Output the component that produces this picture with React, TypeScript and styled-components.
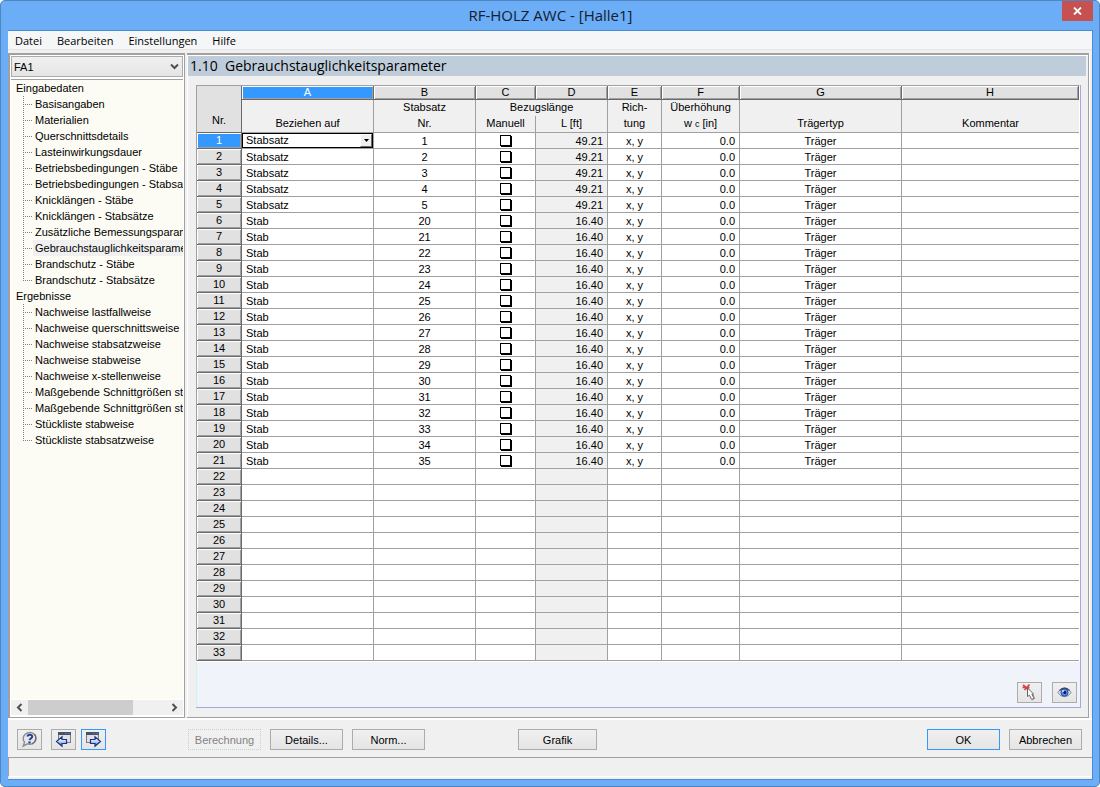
import React from "react";
import styled, { createGlobalStyle, css } from "styled-components";

const ui = '"Liberation Sans", Arial, sans-serif';
const caption = '"Open Sans", "Segoe UI", sans-serif';
const line = "#a0a0a0";

const GlobalStyle = createGlobalStyle`
  *, *::before, *::after { box-sizing: border-box; }
  body { margin: 0; background: #fff; color: #000; font: 11px/16px ${ui}; }
  button, select, input { font: inherit; color: inherit; margin: 0; padding: 0; border-radius: 0; }
`;

const Window = styled.div`
  display: flex;
  flex-direction: column;
  min-height: 100vh;
  padding: 0 6px 6px 7px;
  background: #6badf6;
  border: 1px solid #4f86c0;
  border-radius: 5px;
`;

const TitleBar = styled.header`
  display: grid;
  grid-template-columns: 1fr auto 1fr;
  height: 29px;
`;

const Title = styled.h1`
  grid-column: 2;
  margin: 0;
  color: #14202e;
  font: 400 15px/28px ${caption};
`;

const CloseButton = styled.button`
  display: grid;
  place-items: center;
  justify-self: end;
  width: 31px;
  height: 20px;
  border: 0;
  background: #c75050;
  color: #fff;
`;

const Client = styled.div`
  flex: 1;
  display: flex;
  flex-direction: column;
  background: #f0f0f0;
  border: 1px solid #4a8bd4;
  border-width: 1px 1px 1px 0;
`;

const MenuBar = styled.nav`
  display: flex;
  gap: 15px;
  height: 19px;
  padding-left: 7px;
  background: #f5f6f7;
  border-bottom: 1px solid #e5e5e5;
  font: 11px/20px ${caption};
`;

const MenuLink = styled.a`
  color: inherit;
  text-decoration: none;
`;

const Work = styled.div`
  flex: 1;
  display: flex;
  gap: 2px;
  margin-top: 3px;
  border-bottom: 2px solid #fff;
`;

const Sidebar = styled.aside`
  display: flex;
  flex-direction: column;
  width: 177px;
  padding: 1px 1px 2px;
  background: #fff;
  border: 1px solid ${line};
  border-width: 2px 1px 1px 2px;
`;

const CaseSelect = styled.div`
  display: flex;
  border-bottom: 1px solid ${line};
  padding-bottom: 2px;
`;

const stacked = css`
  appearance: none;
  grid-area: 1 / 1;
`;

const SelectBox = styled.div`
  flex: 1;
  display: grid;
  align-items: center;
  svg { grid-area: 1 / 1; justify-self: end; margin-right: 4px; pointer-events: none; }
`;

const Select = styled.select`
  ${stacked}
  width: 100%;
  height: 21px;
  padding-left: 2px;
  border: 1px solid #acacac;
  background: linear-gradient(#f0f0f0, #e5e5e5);
`;

const Tree = styled.ul`
  flex: 1;
  margin: 0;
  padding: 0 0 0 5px;
  overflow: hidden;
  list-style: none;
  white-space: nowrap;
  background: #fcfcf4;
`;

const Branch = styled.ul`
  margin: 0;
  padding: 0 0 0 7px;
  list-style: none;
`;

const Leaf = styled.li`
  padding-left: 10px;
  background-image:
    repeating-linear-gradient(90deg, #808080 0 1px, transparent 1px 2px),
    repeating-linear-gradient(#808080 0 1px, transparent 1px 2px);
  background-repeat: no-repeat;
  background-position: 0 8px, 0 0;
  background-size: 9px 1px, 1px 100%;
  &:last-child { background-size: 9px 1px, 1px 9px; }
`;

const TreeLink = styled.a<{ $current?: boolean }>`
  display: block;
  padding-left: 2px;
  overflow: hidden;
  color: inherit;
  text-decoration: none;
  background: ${(p) => (p.$current ? "#f0f0f0" : "transparent")};
`;

const ScrollBar = styled.div`
  display: grid;
  grid-template-columns: 17px 1fr 17px;
  height: 15px;
  margin-top: 1px;
  background: #f0f0f0;
`;

const ScrollButton = styled.button`
  display: grid;
  place-items: center;
  border: 0;
  background: transparent;
`;

const ScrollThumb = styled.div`
  width: 76%;
  background: #cdcdcd;
`;

const Main = styled.main`
  flex: 1;
  min-width: 0;
  display: flex;
  flex-direction: column;
  margin-right: 3px;
  padding: 1px 2px 9px 1px;
  border: 1px solid ${line};
  border-width: 2px 1px 1px 0;
  box-shadow: inset 1px 1px #fff, 1px 0 #fff;
`;

const PageTitle = styled.h2`
  margin: 0 0 9px;
  padding-left: 2px;
  background: #bfcddb;
  font: 400 14px/20px ${caption};
  white-space: pre;
`;

const GridPanel = styled.section`
  flex: 1;
  display: flex;
  flex-direction: column;
  margin: 0 5px 0 8px;
  background: #f0f4fa;
  border: 1px solid #a6a6e6;
  border-width: 0 1px 1px 0;
  box-shadow: inset 1px 0 #d2f2ee;
`;

const Grid = styled.table`
  width: 100%;
  table-layout: fixed;
  border-collapse: separate;
  border-spacing: 0;
  border: 1px solid ${line};
  border-width: 1px 0 0 1px;
  border-right: 1px solid #fff;
  box-shadow: 0 1px #fff;
`;

const bevel = css`
  background: #e1e1e1;
  border: 1px solid #696969;
  border-width: 0 1px 1px 0;
  box-shadow: inset 1px 1px #fff, inset -1px -1px ${line};
`;

const Corner = styled.th`
  padding: 21px 0 0;
  font-weight: 400;
  line-height: 14px;
  background: #e1e1e1;
  border-right: 1px solid #696969;
  border-bottom: 1px solid #696969;
`;

const Letter = styled.th<{ $active?: boolean }>`
  ${bevel}
  height: 14px;
  padding: 0;
  font-weight: 400;
  line-height: 13px;
  ${(p) => p.$active && css`background: #3399ff; color: #fff;`}
`;

const Head = styled.th<{ $upper?: boolean; $last?: boolean }>`
  height: ${(p) => (p.$upper ? 16 : 17)}px;
  padding: 0;
  font-weight: 400;
  line-height: 15px;
  vertical-align: top;
  background: #f0f0f0;
  border: 0 solid ${line};
  border-right-width: ${(p) => (p.$last ? 0 : 1)}px;
  border-bottom-width: ${(p) => (p.$upper ? 0 : 1)}px;
`;

const RowNumber = styled.th<{ $active?: boolean }>`
  ${bevel}
  height: 16px;
  padding: 0;
  font-weight: 400;
  line-height: 14px;
  vertical-align: top;
  ${(p) => p.$active && css`background: #3399ff; color: #fff;`}
`;

const Cell = styled.td<{ $align?: string; $locked?: boolean; $last?: boolean }>`
  height: 16px;
  padding: 1px 4px 0;
  line-height: 14px;
  text-align: ${(p) => p.$align || "left"};
  background: ${(p) => (p.$locked ? "#f0f0f0" : "#fff")};
  border: 0 solid ${line};
  border-width: 0 ${(p) => (p.$last ? 0 : 1)}px 1px 0;
`;

const EditCell = styled(Cell)`
  padding: 0;
`;

const CheckCell = styled(Cell)`
  padding: 0;
`;

const CellSelectBox = styled(SelectBox)`
  border: 1px solid #000;
  height: 15px;
`;

const CellSelect = styled.select`
  ${stacked}
  width: 100%;
  height: 13px;
  padding-left: 3px;
  border: 0;
  background: #fff;
  line-height: 13px;
`;

const DropMark = styled.span`
  grid-area: 1 / 1;
  justify-self: end;
  display: grid;
  place-items: center;
  width: 12px;
  height: 13px;
  background: #f0f0f0;
  border: 1px solid #fff;
  border-right-color: #696969;
  border-bottom-color: #696969;
  pointer-events: none;
  svg { margin: 0; grid-area: auto; justify-self: center; }
`;

const Check = styled.input`
  display: block;
  appearance: none;
  width: 11px;
  height: 11px;
  margin: 0 auto;
  border: 1px solid #000;
  background: #fff;
  box-shadow: 1px 1px #000;
`;

const Sub = styled.small`
  font-size: 9px;
  line-height: 1;
`;

const PanelTools = styled.div`
  display: flex;
  justify-content: flex-end;
  gap: 10px;
  margin-top: auto;
  padding: 0 3px 4px;
`;

const Button = styled.button<{ $default?: boolean; $wide?: boolean }>`
  display: grid;
  place-items: center;
  width: ${(p) => (p.$wide ? 79 : 73)}px;
  height: 21px;
  border: 1px solid ${(p) => (p.$default ? "#3399ff" : "#acacac")};
  background: linear-gradient(#f0f0f0, #e5e5e5);
  &:disabled {
    color: #838383;
    background: #f0f0f0;
    border: 1px dotted #bcd8cc;
  }
`;

const IconButton = styled(Button)`
  width: 25px;
`;

const Footer = styled.footer`
  display: flex;
  align-items: center;
  height: 38px;
  padding: 2px 10px 0 9px;
  border-bottom: 1px solid ${line};
`;

const ButtonGroup = styled.div<{ $gap: number; $width?: number; $end?: boolean }>`
  display: flex;
  gap: ${(p) => p.$gap}px;
  width: ${(p) => (p.$width ? p.$width + "px" : "auto")};
  margin-left: ${(p) => (p.$end ? "auto" : 0)};
`;

const StatusBar = styled.div`
  height: 19px;
  margin-bottom: 2px;
  border-left: 1px solid ${line};
  border-bottom: 1px solid #fff;
`;

const Chevron = ({ d }: { d: string }) => (
  <svg width="9" height="9" viewBox="0 0 9 9" fill="none" stroke="#505050" strokeWidth="2" aria-hidden="true">
    <path d={d} />
  </svg>
);

const HelpIcon = () => (
  <svg width="17" height="17" viewBox="0 0 17 17" aria-hidden="true">
    <path d="M9 1.500c3.500 0 6 2.600 6 5.800s-2.500 5.900-6 5.900c-.9 0-1.700-.1-2.400-.4L2.200 15l1.300-3.800C2.600 10.200 2.200 8.900 2.200 7.500c0-3.400 3-6 6.800-6z" fill="#e6e8f0" stroke="#8e8e8e" strokeWidth="1.400" />
    <path d="M13.600 3.200c2.300 3 1.500 7.700-2.700 9.600" fill="none" stroke="#666" strokeWidth="1.200" />
    <path d="M6.300 5.500C6.600 4 8 3.600 9.100 3.700c2.700.2 2.700 2.600.9 3.600-.9.500-1.300 1-1.400 1.900" fill="none" stroke="#24408e" strokeWidth="2" />
    <rect x="7.400" y="10.400" width="2.200" height="2" fill="#24408e" />
  </svg>
);

const PageIcon = ({ forward }: { forward?: boolean }) => {
  const fill = forward ? "arrow-forward" : "arrow-back";
  return (
    <svg width="17" height="17" viewBox="0 0 17 17" aria-hidden="true">
      <defs>
        <linearGradient id={fill} x1="0" y1="0" x2="0" y2="1">
          <stop offset="0.300" stopColor="#eaf3ff" />
          <stop offset="0.600" stopColor="#9cc3ff" />
          <stop offset="1" stopColor="#2f56b0" />
        </linearGradient>
      </defs>
      <rect x={forward ? 1.5 : 3.5} y="1.500" width="12" height="10" fill="#dfe1e6" stroke="#7c7c7c" />
      <path d={forward ? "M1 1h13v3H1z" : "M3 1h13v3H3z"} fill="#4a5264" />
      <path d={forward ? "M8 2.500h5" : "M10 2.500h5"} stroke="#3d6fe0" strokeDasharray="2 1" />
      <path
        d={forward ? "M5.500 8.500h4.500V5.800l5.500 4.700-5.500 4.700v-2.700H5.500z" : "M11.500 8.500H7V5.800l-5.500 4.700L7 15.200v-2.700h4.500z"}
        fill={`url(#${fill})`}
        stroke="#1f3275"
        strokeWidth="1.200"
      />
    </svg>
  );
};

const PickIcon = () => (
  <svg width="17" height="17" viewBox="0 0 17 17" aria-hidden="true">
    <path d="M2 1l6 5M8.500 .5L3.500 6M1.500 3.500h7" stroke="#d9444a" strokeWidth="1.700" />
    <path d="M6.500 4v8.500l2-1.300 2.200 4.300 2.300-1.200-2.200-4.200h1.900z" fill="#fff" stroke="#666" />
    <path d="M12 10.500l1.500 4-2.500 1.500" fill="none" stroke="#8b8b8b" />
  </svg>
);

const EyeIcon = () => (
  <svg width="15" height="13" viewBox="0 0 15 13" aria-hidden="true">
    <path d="M1 6.500C3 3.300 5 2 7.500 2S12 3.300 14 6.500c-2 3-4 4.200-6.500 4.200S3 9.500 1 6.500z" fill="#dfe5f2" stroke="#7b8498" />
    <path d="M2.500 4.500c3-3.300 7-3.300 10 0" fill="none" stroke="#39425a" strokeWidth="1.200" />
    <circle cx="7.500" cy="6.500" r="3.600" fill="#5b8cf0" stroke="#2a4ba6" />
    <circle cx="7.800" cy="6.600" r="1.500" fill="#10183c" />
    <circle cx="6" cy="5" r="1" fill="#d6e4ff" />
  </svg>
);

const inputPages = [
  "Basisangaben", "Materialien", "Querschnittsdetails", "Lasteinwirkungsdauer",
  "Betriebsbedingungen - Stäbe", "Betriebsbedingungen - Stabsatz", "Knicklängen - Stäbe",
  "Knicklängen - Stabsätze", "Zusätzliche Bemessungsparameter", "Gebrauchstauglichkeitsparameter",
  "Brandschutz - Stäbe", "Brandschutz - Stabsätze",
];
const resultPages = [
  "Nachweise lastfallweise", "Nachweise querschnittsweise", "Nachweise stabsatzweise",
  "Nachweise stabweise", "Nachweise x-stellenweise", "Maßgebende Schnittgrößen stabweise",
  "Maßgebende Schnittgrößen stabsatzweise", "Stückliste stabweise", "Stückliste stabsatzweise",
];

const rows = Array.from({ length: 33 }, (_, i) => {
  if (i > 20) return null;
  const set = i < 5;
  return { type: set ? "Stabsatz" : "Stab", nr: set ? i + 1 : i + 15, length: set ? "49.21" : "16.40" };
});

const columnWidths = [45, 132, 102, 60, 72, 54, 78, 162];

const Pages = ({ items }: { items: string[] }) => (
  <Branch>
    {items.map((item) => (
      <Leaf key={item}>
        <TreeLink href="#" $current={item === "Gebrauchstauglichkeitsparameter"}>{item}</TreeLink>
      </Leaf>
    ))}
  </Branch>
);

export default function App() {
  return (
    <>
      <GlobalStyle />
      <Window>
        <TitleBar>
          <Title>RF-HOLZ AWC - [Halle1]</Title>
          <CloseButton aria-label="Schließen">
            <svg width="9" height="8" viewBox="0 0 9 8" stroke="#fff" strokeWidth="1.800" aria-hidden="true">
              <path d="M1 .5l7 7M8 .5l-7 7" />
            </svg>
          </CloseButton>
        </TitleBar>
        <Client>
          <MenuBar>
            {["Datei", "Bearbeiten", "Einstellungen", "Hilfe"].map((m) => (
              <MenuLink key={m} href="#">{m}</MenuLink>
            ))}
          </MenuBar>
          <Work>
            <Sidebar>
              <CaseSelect>
                <SelectBox>
                  <Select aria-label="Bemessungsfall"><option>FA1</option></Select>
                  <Chevron d="M1 2.500l3.500 3.500L8 2.500" />
                </SelectBox>
              </CaseSelect>
              <Tree>
                <li>Eingabedaten<Pages items={inputPages} /></li>
                <li>Ergebnisse<Pages items={resultPages} /></li>
              </Tree>
              <ScrollBar>
                <ScrollButton aria-label="Nach links"><Chevron d="M6.500 1L3 4.500 6.500 8" /></ScrollButton>
                <ScrollThumb />
                <ScrollButton aria-label="Nach rechts"><Chevron d="M2.500 1L6 4.500 2.500 8" /></ScrollButton>
              </ScrollBar>
            </Sidebar>
            <Main>
              <PageTitle>{"1.10  Gebrauchstauglichkeitsparameter"}</PageTitle>
              <GridPanel>
                <Grid>
                  <colgroup>
                    {columnWidths.map((w, i) => <col key={i} width={w} />)}
                    <col />
                  </colgroup>
                  <thead>
                    <tr>
                      <Corner rowSpan={3}>Nr.</Corner>
                      {"ABCDEFGH".split("").map((l) => <Letter key={l} $active={l === "A"}>{l}</Letter>)}
                    </tr>
                    <tr>
                      <Head $upper />
                      <Head $upper>Stabsatz</Head>
                      <Head $upper colSpan={2}>Bezugslänge</Head>
                      <Head $upper>Rich-</Head>
                      <Head $upper>Überhöhung</Head>
                      <Head $upper />
                      <Head $upper $last />
                    </tr>
                    <tr>
                      <Head>Beziehen auf</Head>
                      <Head>Nr.</Head>
                      <Head>Manuell</Head>
                      <Head>L [ft]</Head>
                      <Head>tung</Head>
                      <Head>w <Sub>c</Sub> [in]</Head>
                      <Head>Trägertyp</Head>
                      <Head $last>Kommentar</Head>
                    </tr>
                  </thead>
                  <tbody>
                    {rows.map((r, i) => (
                      <tr key={i}>
                        <RowNumber $active={i === 0}>{i + 1}</RowNumber>
                        {i === 0 ? (
                          <EditCell>
                            <CellSelectBox>
                              <CellSelect aria-label="Beziehen auf"><option>Stabsatz</option><option>Stab</option></CellSelect>
                              <DropMark>
                                <svg width="5" height="3" viewBox="0 0 5 3" aria-hidden="true"><path d="M0 0h5L2.500 3z" /></svg>
                              </DropMark>
                            </CellSelectBox>
                          </EditCell>
                        ) : (
                          <Cell>{r?.type}</Cell>
                        )}
                        <Cell $align="center">{r?.nr}</Cell>
                        <CheckCell>{r && <Check type="checkbox" aria-label={`Manuell, Zeile ${i + 1}`} />}</CheckCell>
                        <Cell $align="right" $locked>{r?.length}</Cell>
                        <Cell $align="center">{r && "x, y"}</Cell>
                        <Cell $align="right">{r && "0.0"}</Cell>
                        <Cell $align="center">{r && "Träger"}</Cell>
                        <Cell $last />
                      </tr>
                    ))}
                  </tbody>
                </Grid>
                <PanelTools>
                  <IconButton aria-label="Auswählen"><PickIcon /></IconButton>
                  <IconButton aria-label="Ansicht"><EyeIcon /></IconButton>
                </PanelTools>
              </GridPanel>
            </Main>
          </Work>
          <Footer>
            <ButtonGroup $gap={9} $width={34}>
              <IconButton aria-label="Hilfe"><HelpIcon /></IconButton>
            </ButtonGroup>
            <ButtonGroup $gap={5} $width={137}>
              <IconButton aria-label="Vorherige Maske"><PageIcon /></IconButton>
              <IconButton $default aria-label="Nächste Maske"><PageIcon forward /></IconButton>
            </ButtonGroup>
            <ButtonGroup $gap={9} $width={330}>
              <Button disabled>Berechnung</Button>
              <Button>Details...</Button>
              <Button>Norm...</Button>
            </ButtonGroup>
            <Button $wide>Grafik</Button>
            <ButtonGroup $gap={9} $end>
              <Button $default>OK</Button>
              <Button>Abbrechen</Button>
            </ButtonGroup>
          </Footer>
          <StatusBar />
        </Client>
      </Window>
    </>
  );
}
